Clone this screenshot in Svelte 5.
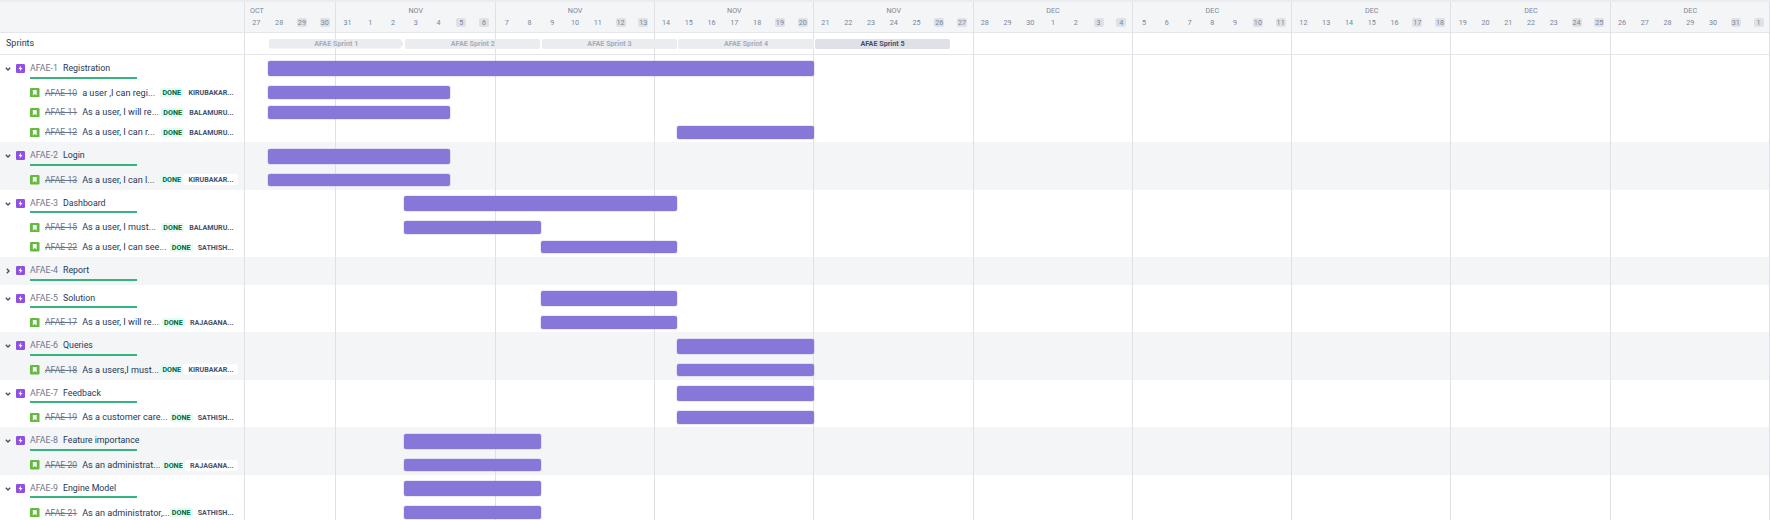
<script lang="ts">
  const DAY_COUNT = 67;

  // each week column of the header: month label + its days, last two are the weekend
  const weeks = [
    { month: 'OCT', first: true, days: [27, 28, 29, 30] },
    { month: 'NOV', days: [31, 1, 2, 3, 4, 5, 6] },
    { month: 'NOV', days: [7, 8, 9, 10, 11, 12, 13] },
    { month: 'NOV', days: [14, 15, 16, 17, 18, 19, 20] },
    { month: 'NOV', days: [21, 22, 23, 24, 25, 26, 27] },
    { month: 'DEC', days: [28, 29, 30, 1, 2, 3, 4] },
    { month: 'DEC', days: [5, 6, 7, 8, 9, 10, 11] },
    { month: 'DEC', days: [12, 13, 14, 15, 16, 17, 18] },
    { month: 'DEC', days: [19, 20, 21, 22, 23, 24, 25] },
    { month: 'DEC', days: [26, 27, 28, 29, 30, 31, 1] }
  ];

  const sprints = [
    { name: 'AFAE Sprint 1', start: 1, end: 7, arrow: true },
    { name: 'AFAE Sprint 2', start: 7, end: 13 },
    { name: 'AFAE Sprint 3', start: 13, end: 19 },
    { name: 'AFAE Sprint 4', start: 19, end: 25 },
    { name: 'AFAE Sprint 5', start: 25, end: 31, active: true }
  ];

  const epics = [
    {
      key: 'AFAE-1', title: 'Registration', start: 1, end: 25,
      stories: [
        { key: 'AFAE-10', title: 'a user ,I can regi...', who: 'KIRUBAKAR...', start: 1, end: 9 },
        { key: 'AFAE-11', title: 'As a user, I will re...', who: 'BALAMURU...', start: 1, end: 9 },
        { key: 'AFAE-12', title: 'As a user, I can r...', who: 'BALAMURU...', start: 19, end: 25 }
      ]
    },
    {
      key: 'AFAE-2', title: 'Login', start: 1, end: 9,
      stories: [{ key: 'AFAE-13', title: 'As a user, I can l...', who: 'KIRUBAKAR...', start: 1, end: 9 }]
    },
    {
      key: 'AFAE-3', title: 'Dashboard', start: 7, end: 19,
      stories: [
        { key: 'AFAE-15', title: 'As a user, I must...', who: 'BALAMURU...', start: 7, end: 13 },
        { key: 'AFAE-22', title: 'As a user, I can see...', who: 'SATHISH...', start: 13, end: 19 }
      ]
    },
    { key: 'AFAE-4', title: 'Report', start: 0, end: 0, collapsed: true, stories: [] },
    {
      key: 'AFAE-5', title: 'Solution', start: 13, end: 19,
      stories: [{ key: 'AFAE-17', title: 'As a user, I will re...', who: 'RAJAGANA...', start: 13, end: 19 }]
    },
    {
      key: 'AFAE-6', title: 'Queries', start: 19, end: 25,
      stories: [{ key: 'AFAE-18', title: 'As a users,I must...', who: 'KIRUBAKAR...', start: 19, end: 25 }]
    },
    {
      key: 'AFAE-7', title: 'Feedback', start: 19, end: 25,
      stories: [{ key: 'AFAE-19', title: 'As a customer care...', who: 'SATHISH...', start: 19, end: 25 }]
    },
    {
      key: 'AFAE-8', title: 'Feature importance', start: 7, end: 13,
      stories: [{ key: 'AFAE-20', title: 'As an administrat...', who: 'RAJAGANA...', start: 7, end: 13 }]
    },
    {
      key: 'AFAE-9', title: 'Engine Model', start: 7, end: 13,
      stories: [{ key: 'AFAE-21', title: 'As an administrator,...', who: 'SATHISH...', start: 7, end: 13 }]
    }
  ];

  function isWeekend(weekIdx: number, dayIdx: number) {
    return dayIdx >= weeks[weekIdx].days.length - 2;
  }
</script>

<div class="roadmap">
  <div class="head">
    <div class="side"></div>
    <div class="calendar">
      {#each weeks as week, w (w)}
        <div class="week" class:first={week.first} style="flex-grow: {week.days.length}">
          <div class="month">{week.month}</div>
          <div class="days">
            {#each week.days as day, d (d)}
              <span class="day"><span class:weekend={isWeekend(w, d)}>{day}</span></span>
            {/each}
          </div>
        </div>
      {/each}
    </div>
  </div>

  <div class="body">
    <div class="gridlines">
      {#each weeks as week, w (w)}
        <div class="gridline" style="flex-grow: {week.days.length}"></div>
      {/each}
    </div>

    <div class="sprint-row">
      <div class="side sprint-label">Sprints</div>
      <div class="track" style="--days: {DAY_COUNT}">
        {#each sprints as sprint (sprint.name)}
          <div
            class="sprint"
            class:active={sprint.active}
            class:arrow={sprint.arrow}
            style="grid-column: {sprint.start + 1} / {sprint.end + 1}"
          >
            {sprint.name}
          </div>
        {/each}
      </div>
    </div>

    {#each epics as epic, i (epic.key)}
      <div class="group" class:shaded={i % 2 === 1}>
        <div class="row epic-row">
          <div class="side epic-cell">
            <svg class="chevron" viewBox="0 0 8 8" width="8" height="8">
              {#if epic.collapsed}
                <path d="M2.8 1.8 5 4 2.8 6.2" />
              {:else}
                <path d="M1.8 2.8 4 5 6.2 2.8" />
              {/if}
            </svg>
            <svg class="type-icon" viewBox="0 0 9 9" width="9" height="9">
              <rect width="9" height="9" rx="1.2" fill="#904ee2" />
              <path d="M5.2 1.5 2.5 5h1.7L3.7 7.5 6.5 3.9H4.7z" fill="#fff" />
            </svg>
            <div class="epic-text">
              <div class="epic-title"><span class="epic-key">{epic.key}</span>{epic.title}</div>
              <div class="progress"></div>
            </div>
          </div>
          <div class="track" style="--days: {DAY_COUNT}">
            {#if epic.end > 0}
              <div class="bar epic-bar" style="grid-column: {epic.start + 1} / {epic.end + 1}"></div>
            {/if}
          </div>
        </div>

        {#each epic.stories as story (story.key)}
          <div class="row story-row">
            <div class="side story-cell">
              <svg class="type-icon" viewBox="0 0 9 9" width="9.5" height="9.5">
                <rect width="9" height="9" rx="1.2" fill="#63ba3c" />
                <path d="M2.7 2h3.6v5L4.5 5.6 2.7 7z" fill="#fff" />
              </svg>
              <s class="story-key">{story.key}</s>
              <span class="story-title">{story.title}</span>
              <span class="lozenge">DONE</span>
              <span class="assignee">{story.who}</span>
            </div>
            <div class="track" style="--days: {DAY_COUNT}">
              <div class="bar story-bar" style="grid-column: {story.start + 1} / {story.end + 1}"></div>
            </div>
          </div>
        {/each}
      </div>
    {/each}
  </div>
</div>

<style>
  :global(body) {
    margin: 0;
    background: #fff;
  }
  .roadmap {
    width: 1770px;
    height: 520px;
    overflow: hidden;
    font-family: Roboto, 'Noto Sans', sans-serif;
    color: #253858;
    border-top: 2px solid #ebecf0;
    box-sizing: border-box;
  }
  .side {
    width: 245px;
    flex-shrink: 0;
    box-sizing: border-box;
    border-right: 1px solid #dfe1e6;
  }

  /* header */
  .head {
    display: flex;
    height: 30px;
    background: #f4f5f7;
  }
  .calendar {
    flex: 1;
    display: flex;
  }
  .week {
    flex: 1 1 0;
    min-width: 0;
    display: flex;
    flex-direction: column;
  }
  .month {
    height: 16px;
    line-height: 17px;
    text-align: center;
    font-size: 7.2px;
    color: #7a869a;
  }
  .week.first .month {
    text-align: left;
    padding-left: 5px;
  }
  .days {
    display: flex;
  }
  .day {
    flex: 1 1 0;
    text-align: center;
    font-size: 7.2px;
    line-height: 9px;
    color: #7a869a;
  }
  .weekend {
    display: inline-block;
    min-width: 10px;
    border-radius: 2px;
    background: #dfe1e6;
  }

  /* chart */
  .body {
    position: relative;
    border-top: 1px solid #e4e6ea;
  }
  .gridlines {
    position: absolute;
    top: -31px;
    left: 245px;
    right: 0;
    display: flex;
    height: 520px;
  }
  .gridline {
    flex: 1 1 0;
    box-sizing: border-box;
    border-right: 1px solid #dfe1e6;
  }
  .sprint-row {
    display: flex;
    height: 21px;
    border-bottom: 1px solid #e4e6ea;
    box-sizing: content-box;
  }
  .sprint-label {
    font-size: 9px;
    line-height: 21px;
    padding-left: 6px;
  }
  .track {
    flex: 1;
    display: grid;
    grid-template-columns: repeat(var(--days), 1fr);
    align-items: center;
  }
  .sprint {
    position: relative;
    z-index: 2;
    height: 10px;
    line-height: 10px;
    margin: 0 0.5px 0 1px;
    border-radius: 2px;
    background: #ebecf0;
    color: #a5adba;
    font-size: 7.2px;
    font-weight: 700;
    text-align: center;
    white-space: nowrap;
  }
  .sprint.arrow {
    clip-path: polygon(0 0, calc(100% - 4px) 0, 100% 50%, calc(100% - 4px) 100%, 0 100%);
  }
  .sprint.active {
    background: #dfe1e6;
    color: #42526e;
  }

  .group.shaded {
    background: #f4f5f7;
  }
  .row {
    display: flex;
  }
  .epic-row {
    height: 27.7px;
  }
  .story-row {
    height: 19.85px;
  }
  .epic-cell {
    display: flex;
    align-items: flex-start;
    padding: 9px 0 0 3.5px;
  }
  .chevron {
    margin-right: 4.5px;
    margin-top: 1px;
    fill: none;
    stroke: #42526e;
    stroke-width: 1.4;
  }
  .type-icon {
    flex-shrink: 0;
  }
  .epic-text {
    margin-left: 5px;
    margin-top: -3px;
    width: 107px;
  }
  .epic-title {
    font-size: 8.8px;
    line-height: 14px;
    white-space: nowrap;
  }
  .epic-key {
    color: #6b778c;
    margin-right: 5px;
  }
  .progress {
    height: 2px;
    margin-top: 1.5px;
    background: #36b37e;
  }
  .story-cell {
    display: flex;
    align-items: center;
    padding: 0 6.5px 0 30.25px;
    min-width: 0;
  }
  .story-key {
    margin-left: 5.25px;
    flex-shrink: 0;
    font-size: 8.6px;
    color: #6b778c;
  }
  .story-title {
    flex: 1 1 0;
    min-width: 0;
    margin-left: 5px;
    font-size: 9.1px;
    white-space: nowrap;
  }
  .lozenge {
    flex-shrink: 0;
    padding: 0 2.25px;
    border-radius: 2px;
    background: #e3fcef;
    color: #006644;
    font-size: 7.2px;
    font-weight: 700;
    line-height: 9px;
  }
  .assignee {
    flex-shrink: 0;
    padding: 1px 4px 1px 5px;
    border-radius: 3px;
    font-size: 7.1px;
    font-weight: 700;
    line-height: 9px;
    color: #42526e;
    white-space: nowrap;
  }
  .shaded .assignee {
    background: #fff;
  }
  .bar {
    position: relative;
    z-index: 2;
    border-radius: 2px;
    background: #8777d9;
    box-shadow: 0 0 0 0.5px rgba(135, 119, 217, 0.35);
  }
  .epic-bar {
    height: 15px;
  }
  .story-bar {
    height: 12.5px;
  }
</style>
